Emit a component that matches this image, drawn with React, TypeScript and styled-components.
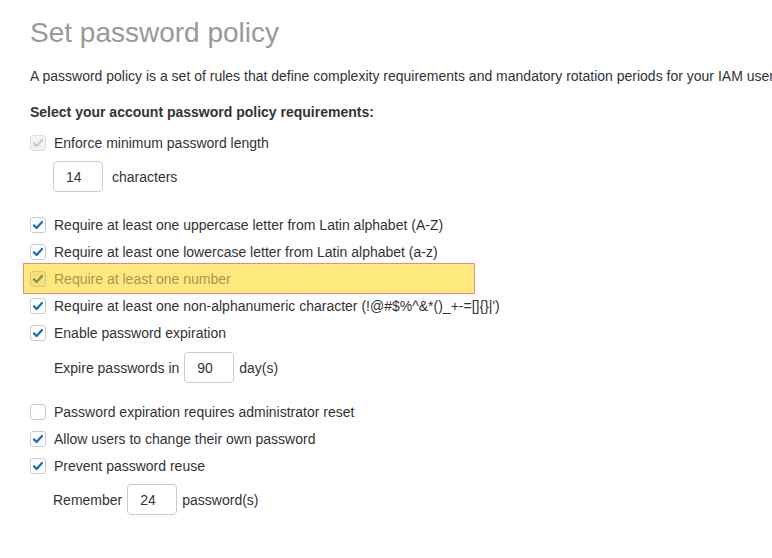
import React from 'react';
import styled, { createGlobalStyle } from 'styled-components';

const GlobalStyle = createGlobalStyle`
  html, body {
    margin: 0;
    padding: 0;
    background: #ffffff;
  }
  body {
    font-family: "Liberation Sans", Arial, sans-serif;
    color: #333333;
    overflow: hidden;
  }
`;

const Page = styled.div`
  width: 772px;
  height: 558px;
  padding: 17px 0 0 30px;
  box-sizing: border-box;
  overflow: hidden;
`;

const Title = styled.h1`
  margin: 0;
  font-size: 28px;
  line-height: 32px;
  font-weight: normal;
  color: #999999;
`;

// the reference cuts this line off at the right edge of the window
const Intro = styled.p`
  margin: 17px 0 0;
  font-size: 14px;
  line-height: 20px;
  white-space: nowrap;
`;

const Heading = styled.h2`
  margin: 16px 0 0;
  font-size: 14px;
  line-height: 20px;
  font-weight: bold;
  color: #333333;
`;

const Options = styled.div`
  display: flex;
  flex-direction: column;
  margin-top: 7px;
`;

const Row = styled.label<{ $dim?: boolean }>`
  display: flex;
  align-items: center;
  gap: 8px;
  height: 27px;
  font-size: 14px;
  white-space: nowrap;
  color: ${({ $dim }) => ($dim ? '#a59a52' : '#333333')};
`;

const Highlight = styled.div`
  width: 452px;
  box-sizing: border-box;
  margin: -2px 0 -2px -7px;
  padding: 1px 0 1px 6px;
  border: 1px solid #f4877c;
  background: #fee97e;
`;

type Tone = 'normal' | 'disabled' | 'marked';

const Box = styled.span<{ $tone: Tone }>`
  display: flex;
  align-items: center;
  justify-content: center;
  width: 16px;
  height: 16px;
  box-sizing: border-box;
  border-radius: 3px;
  border: 1px solid
    ${({ $tone }) => ($tone === 'marked' ? '#d8c873' : $tone === 'disabled' ? '#dddddd' : '#cccccc')};
  background: ${({ $tone }) => ($tone === 'marked' ? '#f4df7a' : $tone === 'disabled' ? '#f3f3f3' : '#ffffff')};
  color: ${({ $tone }) => ($tone === 'marked' ? '#7d9650' : $tone === 'disabled' ? '#c9c9c9' : '#1f6dc2')};
  flex-shrink: 0;
`;

const FieldRow = styled.div<{ $top: number; $bottom: number; $indent: number }>`
  display: flex;
  align-items: center;
  gap: 5px;
  margin: ${({ $top, $bottom, $indent }) => `${$top}px 0 ${$bottom}px ${$indent}px`};
  font-size: 14px;
  color: #333333;
`;

const NumberInput = styled.div<{ $gap?: number }>`
  width: 50px;
  height: 31px;
  box-sizing: border-box;
  border: 1px solid #cccccc;
  border-radius: 4px;
  display: flex;
  align-items: center;
  padding-left: 12px;
  font-size: 14px;
  color: #333333;
  margin-right: ${({ $gap }) => $gap ?? 4}px;
`;

const Check = ({ checked, tone = 'normal' }: { checked?: boolean; tone?: Tone }) => (
  <Box $tone={tone}>
    {checked && (
      <svg width="12" height="12" viewBox="0 0 12 12">
        <path
          d="M2 6.4 L4.6 9 L10 3"
          fill="none"
          stroke="currentColor"
          strokeWidth="2.3"
          strokeLinecap="round"
          strokeLinejoin="round"
        />
      </svg>
    )}
  </Box>
);

export default function App() {
  return (
    <>
      <GlobalStyle />
      <Page>
        <Title>Set password policy</Title>
        <Intro>
          A password policy is a set of rules that define complexity requirements and mandatory rotation periods for
          your IAM users.
        </Intro>
        <Heading>Select your account password policy requirements:</Heading>
        <Options>
          <Row>
            <Check checked tone="disabled" />
            Enforce minimum password length
          </Row>
          <FieldRow $top={5} $bottom={19} $indent={23}>
            <NumberInput $gap={4}>14</NumberInput>
            characters
          </FieldRow>
          <Row>
            <Check checked />
            Require at least one uppercase letter from Latin alphabet (A-Z)
          </Row>
          <Row>
            <Check checked />
            Require at least one lowercase letter from Latin alphabet (a-z)
          </Row>
          <Highlight>
            <Row $dim>
              <Check checked tone="marked" />
              Require at least one number
            </Row>
          </Highlight>
          <Row>
            <Check checked />
            Require at least one non-alphanumeric character (!@#$%^&amp;*()_+-=[]{'{}'}|')
          </Row>
          <Row>
            <Check checked />
            Enable password expiration
          </Row>
          <FieldRow $top={6} $bottom={15} $indent={24}>
            Expire passwords in
            <NumberInput $gap={0}>90</NumberInput>
            day(s)
          </FieldRow>
          <Row>
            <Check />
            Password expiration requires administrator reset
          </Row>
          <Row>
            <Check checked />
            Allow users to change their own password
          </Row>
          <Row>
            <Check checked />
            Prevent password reuse
          </Row>
          <FieldRow $top={5} $bottom={0} $indent={23}>
            Remember
            <NumberInput $gap={0}>24</NumberInput>
            password(s)
          </FieldRow>
        </Options>
      </Page>
    </>
  );
}
